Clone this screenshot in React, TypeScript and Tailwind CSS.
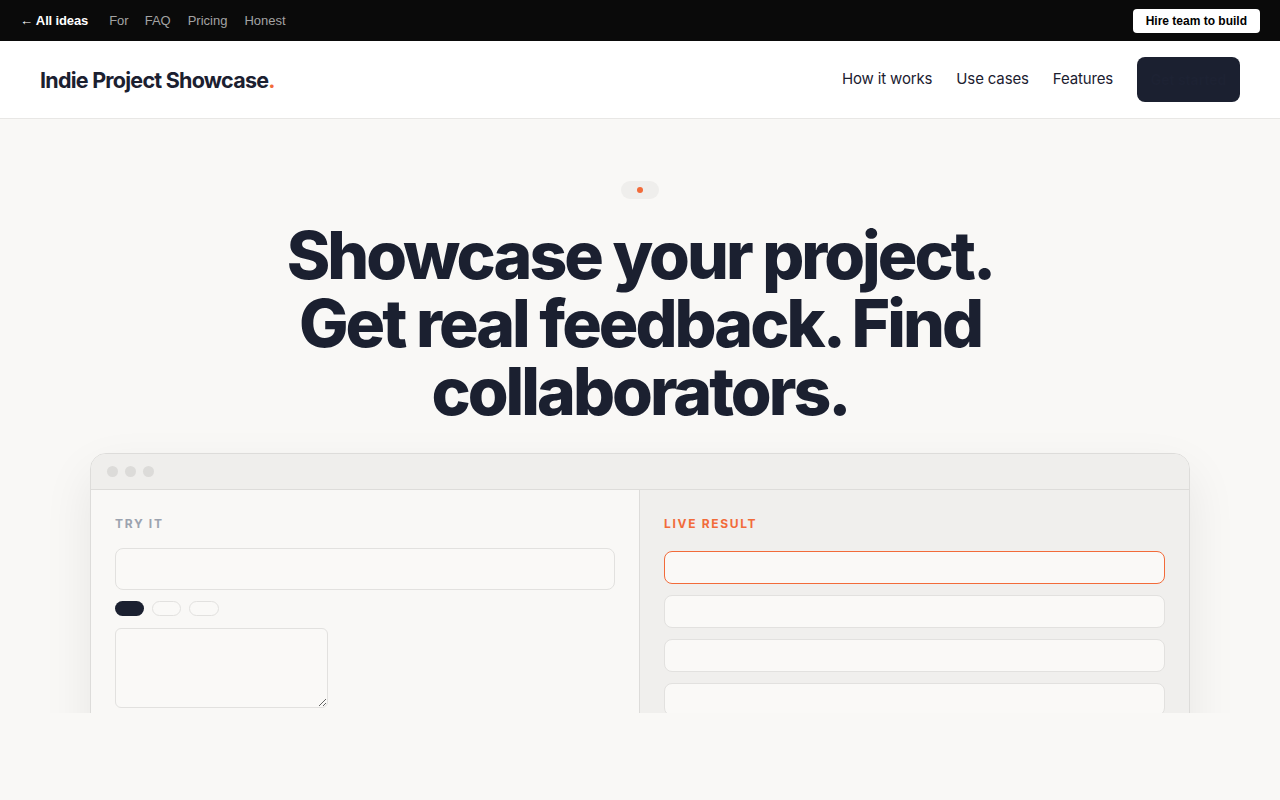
import React from "react";

const display = { fontFamily: "Inter, 'Noto Sans', sans-serif" };
const arial = { fontFamily: "'Liberation Sans', Arial, sans-serif" };

function TopBar() {
  return (
    <div className="h-[41px] bg-[#0a0a0a] flex items-center justify-between pl-[20px] pr-[20px]" style={arial}>
      <div className="flex items-center text-[13px]">
        <span className="text-white font-bold tracking-[-0.01em]">← All ideas</span>
        <span className="ml-[21px] text-[#a3a3a3]">For</span>
        <span className="ml-[16px] text-[#a3a3a3]">FAQ</span>
        <span className="ml-[17px] text-[#a3a3a3]">Pricing</span>
        <span className="ml-[17px] text-[#a3a3a3]">Honest</span>
      </div>
      <button className="h-[24px] px-[13px] rounded-[4px] bg-white text-black text-[12px] font-bold">
        Hire team to build
      </button>
    </div>
  );
}

function NavBar() {
  return (
    <div className="h-[78px] bg-white border-b border-[#e8e7e5] flex items-center justify-between px-[40px]" style={display}>
      <div className="text-[21.5px] font-bold text-[#1b2030] tracking-[-0.035em] pt-[2px]">
        Indie Project Showcase<span className="text-[#f26b3a]">.</span>
      </div>
      <div className="flex items-center">
        <span className="text-[15px] text-[#1b2030] tracking-[-0.01em]">How it works</span>
        <span className="ml-[24px] text-[15px] text-[#1b2030] tracking-[-0.01em]">Use cases</span>
        <span className="ml-[24px] text-[15px] text-[#1b2030] tracking-[-0.01em]">Features</span>
        <button className="ml-[24px] w-[103px] h-[45px] rounded-[8px] bg-[#1b2030] text-[#1d2233] text-[14px] font-semibold">
          Get started
        </button>
      </div>
    </div>
  );
}

function ResultRow({ active }: { active?: boolean }) {
  return (
    <div
      className={
        "h-[33px] rounded-[8px] bg-[#faf9f7] border " +
        (active ? "border-[#f26b3a]" : "border-[#e2e1df]")
      }
    />
  );
}

function DemoWindow() {
  return (
    <div className="w-[1100px] mx-auto rounded-[16px] border border-[#dddcda] bg-[#f9f8f6] shadow-[0_20px_50px_rgba(0,0,0,0.08)] overflow-hidden">
      <div className="h-[36px] bg-[#efeeec] border-b border-[#dddcda] flex items-center gap-[7px] pl-[16px]">
        <span className="w-[11px] h-[11px] rounded-full bg-[#dcdbd9]" />
        <span className="w-[11px] h-[11px] rounded-full bg-[#dcdbd9]" />
        <span className="w-[11px] h-[11px] rounded-full bg-[#dcdbd9]" />
      </div>
      <div className="grid grid-cols-2">
        <div className="px-[24px] pt-[25px] pb-[40px] border-r border-[#dddcda]">
          <div className="text-[12px] font-bold tracking-[0.14em] text-[#9ca3af]" style={display}>TRY IT</div>
          <div className="mt-[15px] h-[42px] rounded-[8px] border border-[#e2e1df] bg-[#faf9f7]" />
          <div className="mt-[11px] flex gap-[8px]">
            <span className="w-[29px] h-[15px] rounded-full bg-[#1b2030]" />
            <span className="w-[29px] h-[15px] rounded-full border border-[#e2e1df] bg-[#faf9f7]" />
            <span className="w-[30px] h-[15px] rounded-full border border-[#e2e1df] bg-[#faf9f7]" />
          </div>
          <textarea className="mt-[12px] block w-[213px] h-[80px] rounded-[6px] border border-[#e2e1df] bg-[#faf9f7] outline-none" />
        </div>
        <div className="bg-[#f0efed] px-[24px] pt-[25px] pb-[40px]">
          <div className="text-[12px] font-bold tracking-[0.14em] text-[#f26b3a]" style={display}>LIVE RESULT</div>
          <div className="mt-[18px] flex flex-col gap-[11px]">
            <ResultRow active />
            <ResultRow />
            <ResultRow />
            <ResultRow />
          </div>
        </div>
      </div>
    </div>
  );
}

export default function App() {
  return (
    <div className="min-h-[800px] bg-[#f9f8f6]">
      <TopBar />
      <NavBar />
      <section className="h-[594px] overflow-hidden pt-[62px]">
        <div className="flex justify-center">
          <span className="w-[38px] h-[18px] rounded-full bg-[#efeeec] flex items-center justify-center">
            <span className="w-[6px] h-[6px] rounded-full bg-[#f26b3a]" />
          </span>
        </div>
        <h1
          className="mt-[22px] mx-auto max-w-[740px] text-center text-[66px] leading-[68px] font-extrabold text-[#1b2030] tracking-[-0.045em]"
          style={display}
        >
          Showcase your project. Get real feedback. Find collaborators.
        </h1>
        <div className="mt-[28px]">
          <DemoWindow />
        </div>
      </section>
    </div>
  );
}
